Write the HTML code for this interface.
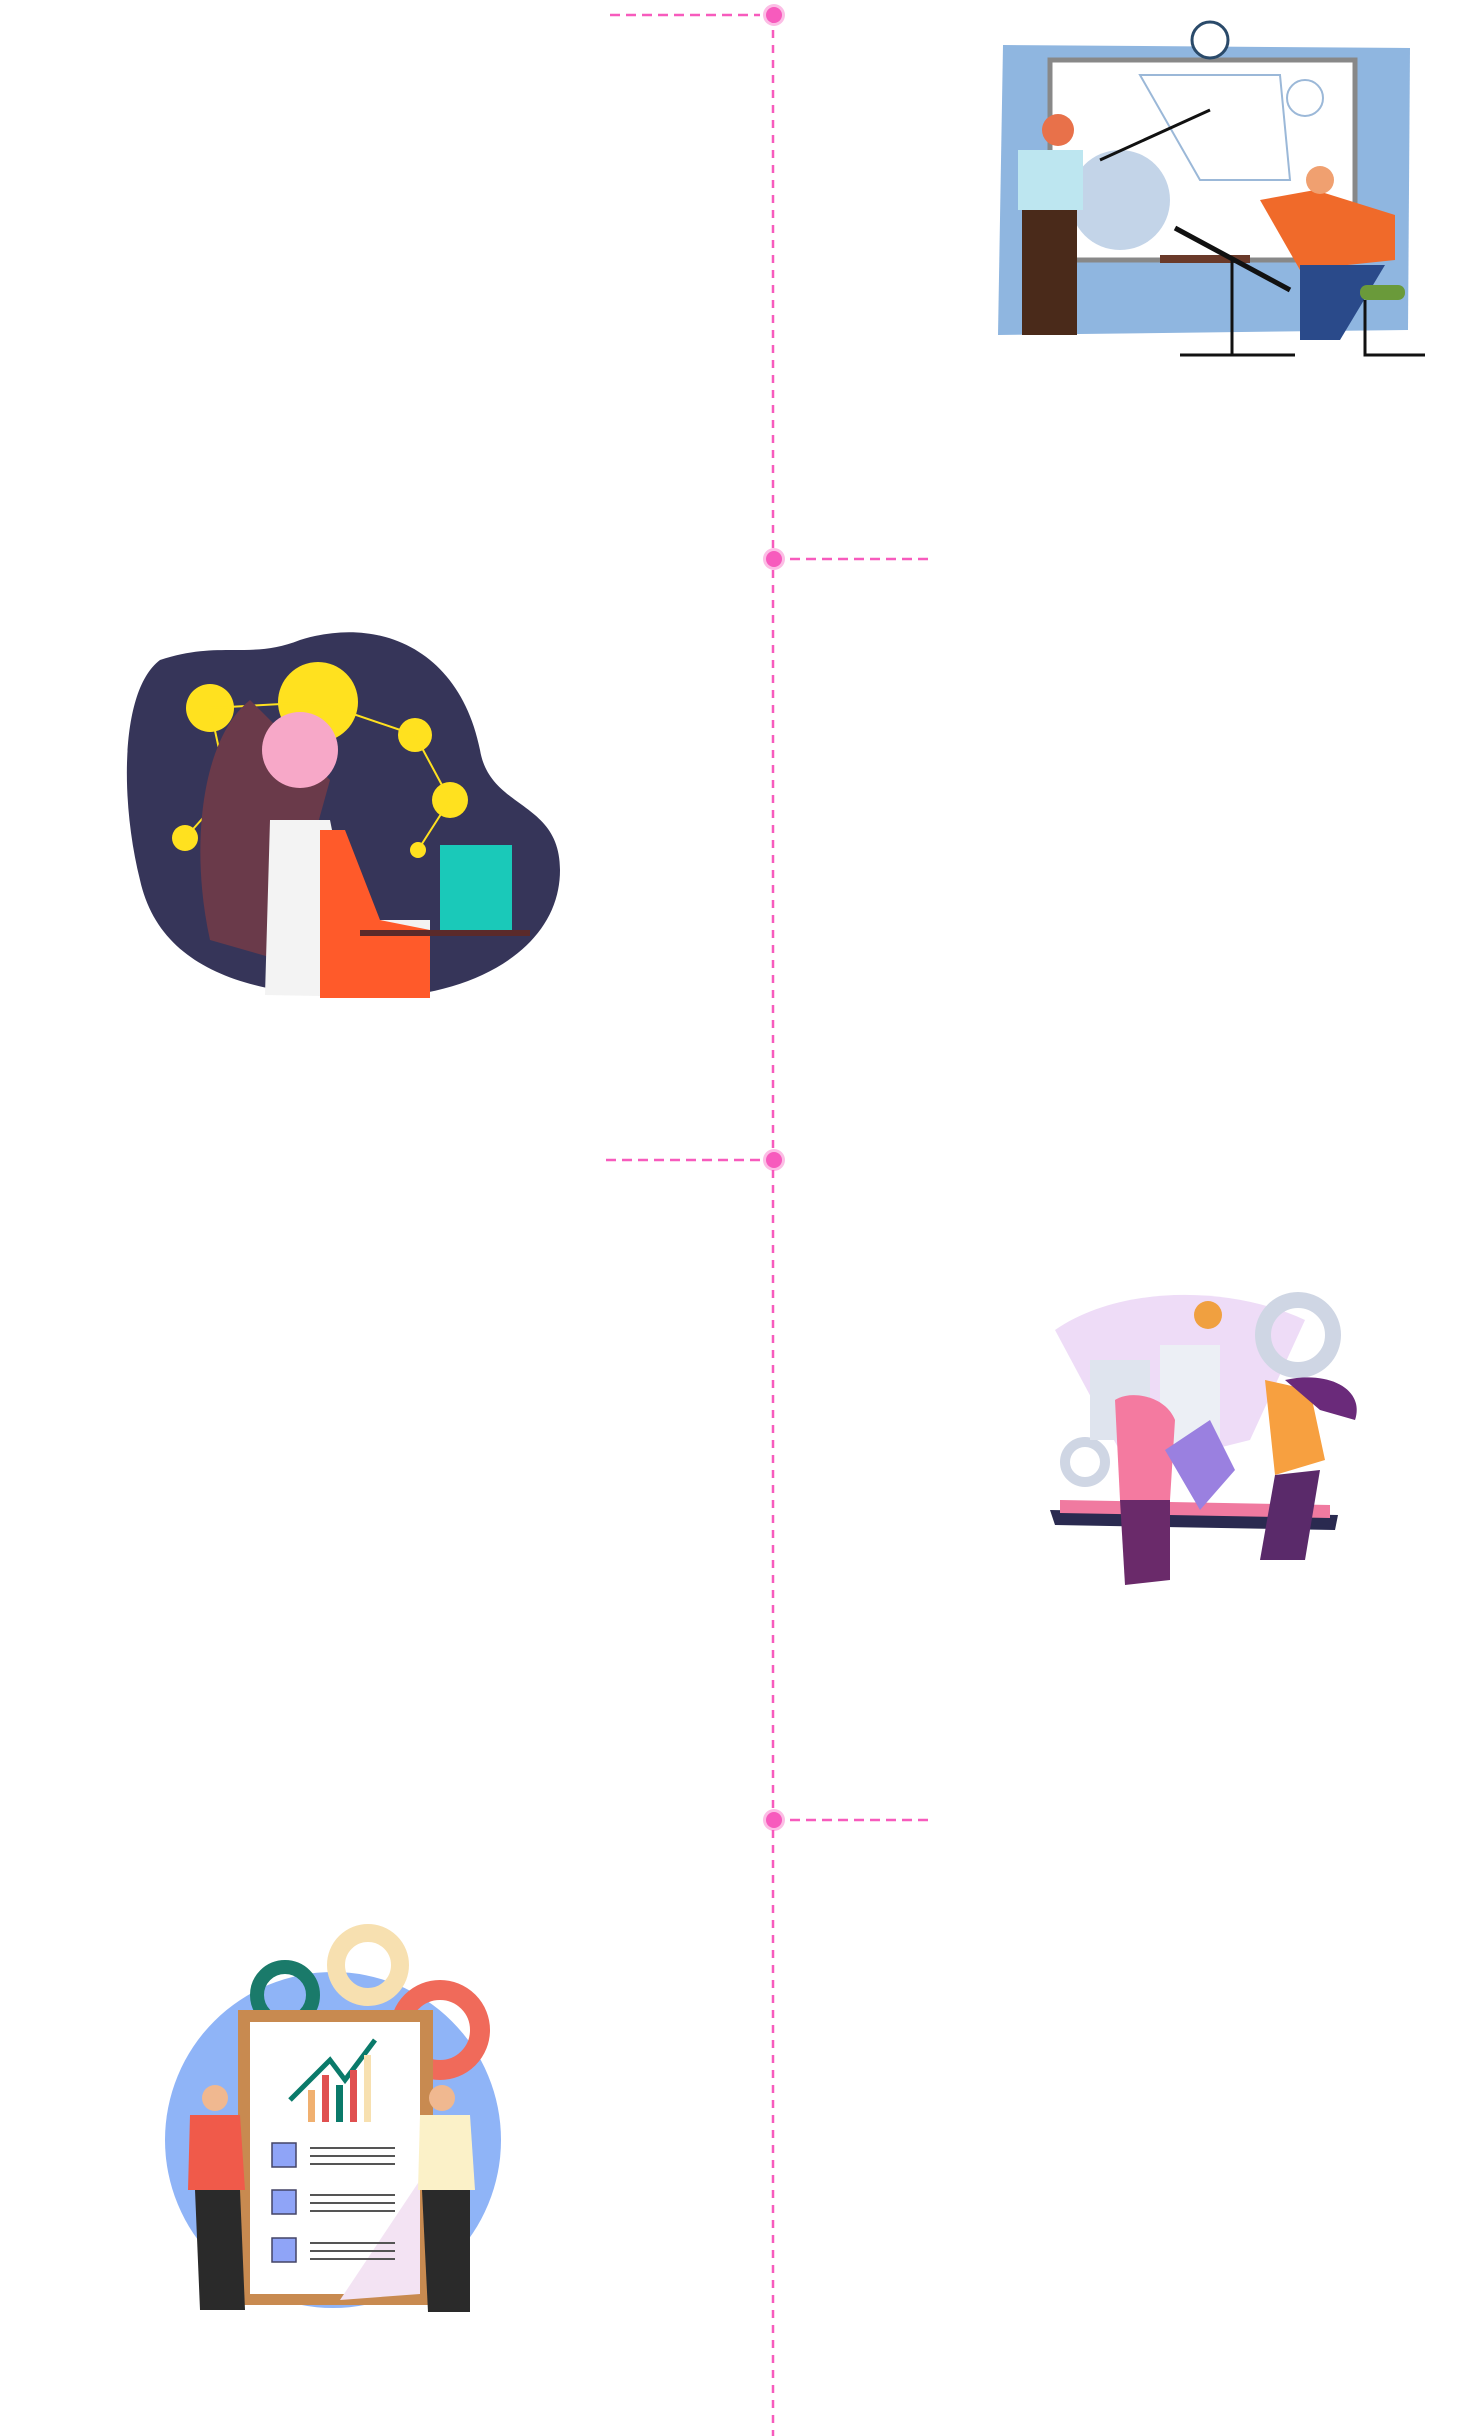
<!DOCTYPE html>
<html><head><meta charset="utf-8">
<style>
html,body{margin:0;padding:0;background:#fff;}
body{width:1469px;height:2436px;position:relative;overflow:hidden;font-family:"Liberation Sans",sans-serif;}
.abs{position:absolute;}
</style></head><body>
<svg class="abs" style="left:0;top:0" width="1469" height="2436">
  <line x1="773" y1="15" x2="773" y2="2436" stroke="#f75bbd" stroke-width="2.5" stroke-dasharray="8,7"/>
  <line x1="610" y1="15" x2="760" y2="15" stroke="#f75bbd" stroke-width="2.5" stroke-dasharray="10,6"/>
  <line x1="790" y1="559" x2="931" y2="559" stroke="#f75bbd" stroke-width="2.5" stroke-dasharray="10,6"/>
  <line x1="606" y1="1160" x2="760" y2="1160" stroke="#f75bbd" stroke-width="2.5" stroke-dasharray="10,6"/>
  <line x1="790" y1="1820" x2="931" y2="1820" stroke="#f75bbd" stroke-width="2.5" stroke-dasharray="10,6"/>
  <g fill="#f75bbd">
    <circle cx="774" cy="15" r="11" opacity="0.4"/><circle cx="774" cy="15" r="8"/>
    <circle cx="774" cy="559" r="11" opacity="0.4"/><circle cx="774" cy="559" r="8"/>
    <circle cx="774" cy="1160" r="11" opacity="0.4"/><circle cx="774" cy="1160" r="8"/>
    <circle cx="774" cy="1820" r="11" opacity="0.4"/><circle cx="774" cy="1820" r="8"/>
  </g>

  <!-- Illustration 1: classroom -->
  <g>
    <path d="M1003 45 L1410 48 L1408 330 L998 335 Z" fill="#8fb6e0"/>
    <rect x="1050" y="60" width="305" height="200" fill="#fff" stroke="#888" stroke-width="5"/>
    <circle cx="1210" cy="40" r="18" fill="#fff" stroke="#2a4a6a" stroke-width="3"/>
    <path d="M1140 75 L1280 75 L1290 180 L1200 180 Z" fill="none" stroke="#9bb8d8" stroke-width="2"/>
    <circle cx="1305" cy="98" r="18" fill="none" stroke="#9bb8d8" stroke-width="2"/>
    <circle cx="1120" cy="200" r="50" fill="#9bb8d8" opacity="0.6"/>
    <rect x="1018" y="150" width="65" height="60" fill="#bde6f0"/>
    <rect x="1022" y="210" width="55" height="125" fill="#4a2a1a"/>
    <circle cx="1058" cy="130" r="16" fill="#e8714a"/>
    <line x1="1100" y1="160" x2="1210" y2="110" stroke="#111" stroke-width="3"/>
    <rect x="1160" y="255" width="90" height="8" fill="#6a3a2a"/>
    <line x1="1175" y1="228" x2="1290" y2="290" stroke="#111" stroke-width="5"/>
    <line x1="1232" y1="260" x2="1232" y2="355" stroke="#111" stroke-width="3"/>
    <line x1="1180" y1="355" x2="1295" y2="355" stroke="#111" stroke-width="3"/>
    <path d="M1260 200 L1315 190 L1395 215 L1395 260 L1300 270 Z" fill="#f06a2a"/>
    <path d="M1300 265 L1385 265 L1340 340 L1300 340 Z" fill="#2a4a8a"/>
    <circle cx="1320" cy="180" r="14" fill="#f0a070"/>
    <rect x="1360" y="285" width="45" height="15" rx="7" fill="#6a9a3a"/>
    <path d="M1365 300 L1365 355 L1425 355" fill="none" stroke="#111" stroke-width="3"/>
  </g>

  <!-- Illustration 2: woman blob -->
  <g>
    <path d="M160 660 C220 640 250 660 300 640 C380 615 460 650 480 750 C490 810 560 800 560 870 C560 950 470 1000 360 998 C250 995 160 970 140 880 C120 800 120 690 160 660 Z" fill="#363559"/>
    <circle cx="210" cy="708" r="24" fill="#ffe11f"/>
    <circle cx="318" cy="702" r="40" fill="#ffe11f"/>
    <circle cx="415" cy="735" r="17" fill="#ffe11f"/>
    <circle cx="450" cy="800" r="18" fill="#ffe11f"/>
    <circle cx="228" cy="790" r="17" fill="#ffe11f"/>
    <circle cx="185" cy="838" r="13" fill="#ffe11f"/>
    <circle cx="418" cy="850" r="8" fill="#ffe11f"/>
    <path d="M210 708 L318 702 L415 735 L450 800 L418 850 M210 708 L228 790 L185 838" stroke="#ffe11f" stroke-width="2" fill="none"/>
    <path d="M250 700 C200 740 190 850 210 940 L280 960 L330 780 Z" fill="#6a3a4a"/>
    <circle cx="300" cy="750" r="38" fill="#f7a8c8"/>
    <path d="M270 820 L330 820 L350 920 L430 920 L430 998 L265 995 Z" fill="#f3f3f3"/>
    <path d="M320 830 L345 830 L380 920 L430 930 L430 998 L320 998 Z" fill="#ff5a2a"/>
    <rect x="440" y="845" width="72" height="85" fill="#1ac9b9"/>
    <rect x="360" y="930" width="170" height="6" fill="#5a2a2a"/>
  </g>

  <!-- Illustration 3: team with city -->
  <g>
    <path d="M1055 1330 C1120 1285 1230 1285 1305 1320 L1250 1440 L1130 1470 Z" fill="#eedcf7"/>
    <circle cx="1298" cy="1335" r="35" fill="none" stroke="#cfd6e4" stroke-width="16"/>
    <circle cx="1085" cy="1462" r="20" fill="none" stroke="#cfd6e4" stroke-width="10"/>
    <rect x="1090" y="1360" width="60" height="80" fill="#dfe4ee"/>
    <rect x="1160" y="1345" width="60" height="100" fill="#eceff5"/>
    <circle cx="1208" cy="1315" r="14" fill="#f0a040"/>
    <path d="M1050 1510 L1338 1515 L1335 1530 L1055 1525 Z" fill="#2a2a50"/>
    <path d="M1060 1500 L1330 1505 L1330 1518 L1060 1513 Z" fill="#f07aa0"/>
    <path d="M1115 1400 C1130 1390 1165 1395 1175 1420 L1170 1500 L1120 1500 Z" fill="#f47aa0"/>
    <path d="M1120 1500 L1170 1500 L1170 1580 L1125 1585 Z" fill="#6a2a6a"/>
    <path d="M1265 1380 L1310 1390 L1325 1460 L1275 1475 Z" fill="#f7a040"/>
    <path d="M1285 1380 C1330 1370 1365 1390 1355 1420 L1320 1410 Z" fill="#6a2a7a"/>
    <path d="M1275 1475 L1320 1470 L1305 1560 L1260 1560 Z" fill="#5a2a6a"/>
    <path d="M1165 1450 L1210 1420 L1235 1470 L1200 1510 Z" fill="#9a80e0"/>
  </g>

  <!-- Illustration 4: chart board -->
  <g>
    <circle cx="333" cy="2140" r="168" fill="#8fb4f7"/>
    <circle cx="285" cy="1995" r="28" fill="none" stroke="#1a7a6a" stroke-width="14"/>
    <circle cx="368" cy="1965" r="32" fill="none" stroke="#f7e0b0" stroke-width="18"/>
    <circle cx="440" cy="2030" r="40" fill="none" stroke="#f06a5a" stroke-width="20"/>
    <rect x="238" y="2010" width="195" height="295" fill="#c88a50"/>
    <rect x="250" y="2022" width="170" height="272" fill="#fff"/>
    <path d="M340 2300 L420 2180 L420 2294 Z" fill="#f3e3f3"/>
    <path d="M290 2100 L330 2060 L345 2080 L375 2040" stroke="#0a7a6a" stroke-width="5" fill="none"/>
    <rect x="308" y="2090" width="7" height="32" fill="#f0b070"/>
    <rect x="322" y="2075" width="7" height="47" fill="#e05050"/>
    <rect x="336" y="2085" width="7" height="37" fill="#0a7a6a"/>
    <rect x="350" y="2070" width="7" height="52" fill="#e05050"/>
    <rect x="364" y="2055" width="7" height="67" fill="#f7e0b0"/>
    <rect x="272" y="2143" width="24" height="24" fill="#8fa4f7" stroke="#446" stroke-width="1.5"/>
    <rect x="272" y="2190" width="24" height="24" fill="#8fa4f7" stroke="#446" stroke-width="1.5"/>
    <rect x="272" y="2238" width="24" height="24" fill="#8fa4f7" stroke="#446" stroke-width="1.5"/>
    <g stroke="#555" stroke-width="2">
      <line x1="310" y1="2148" x2="395" y2="2148"/><line x1="310" y1="2156" x2="395" y2="2156"/><line x1="310" y1="2164" x2="395" y2="2164"/>
      <line x1="310" y1="2195" x2="395" y2="2195"/><line x1="310" y1="2203" x2="395" y2="2203"/><line x1="310" y1="2211" x2="395" y2="2211"/>
      <line x1="310" y1="2243" x2="395" y2="2243"/><line x1="310" y1="2251" x2="395" y2="2251"/><line x1="310" y1="2259" x2="395" y2="2259"/>
    </g>
    <circle cx="215" cy="2098" r="13" fill="#f0b890"/>
    <path d="M190 2115 L240 2115 L245 2190 L188 2190 Z" fill="#f05a4a"/>
    <path d="M195 2190 L240 2190 L245 2310 L200 2310 Z" fill="#2a2a2a"/>
    <circle cx="442" cy="2098" r="13" fill="#f0b890"/>
    <path d="M420 2115 L470 2115 L475 2190 L418 2190 Z" fill="#fbf1c8"/>
    <path d="M422 2190 L470 2190 L470 2312 L428 2312 Z" fill="#2a2a2a"/>
  </g>
</svg>
</body></html>
